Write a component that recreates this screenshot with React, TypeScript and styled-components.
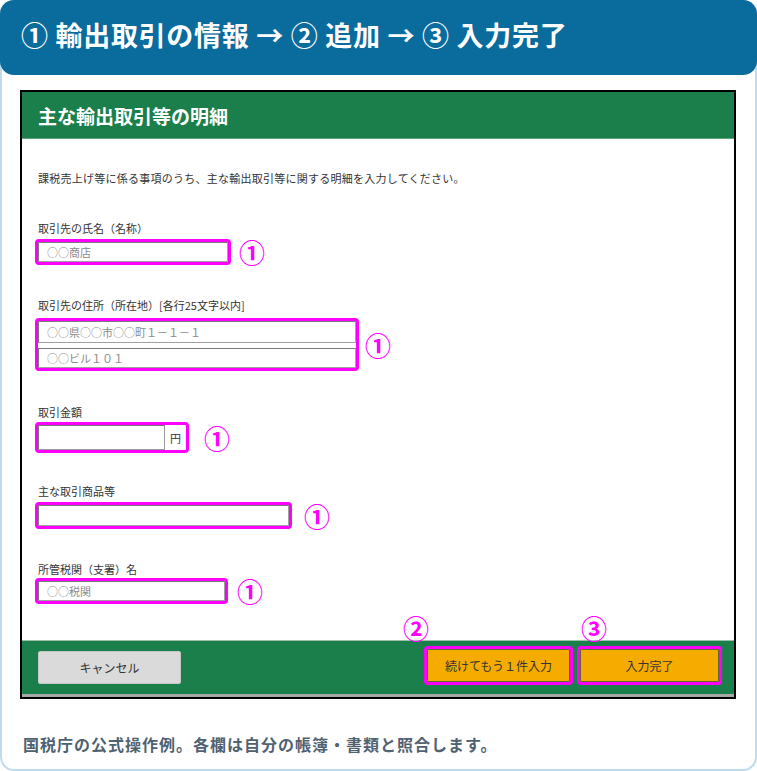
import React from 'react'
import styled, { createGlobalStyle } from 'styled-components'

const GlobalStyle = createGlobalStyle`
  html, body {
    margin: 0;
    padding: 0;
    background: #fff;
  }
  body {
    font-family: "Noto Sans CJK JP", "Noto Sans", sans-serif;
  }
`

const Card = styled.div`
  box-sizing: border-box;
  width: 757px;
  height: 771px;
  border: 2px solid #bfdcee;
  border-radius: 14px;
  background: #fff;
  display: flex;
  flex-direction: column;
`

const StepBar = styled.div`
  margin: -2px -2px 0;
  height: 75px;
  background: #0a6b9d;
  border-radius: 14px;
  display: flex;
  align-items: center;
  padding-left: 21px;
  padding-bottom: 6px;
  box-sizing: border-box;
  color: #fff;
  font-size: 27px;
  font-weight: 700;
  letter-spacing: 0.7px;
  white-space: pre;
`

const Shot = styled.div`
  margin: 15px 19px 0 18px;
  border: 2px solid #000;
  display: flex;
  flex-direction: column;
  background: #fff;
`

const ShotHeader = styled.div`
  height: 46px;
  background: #1a7f4b;
  border-bottom: 1px solid #56a57a;
  display: flex;
  align-items: center;
  padding-left: 16px;
  color: #fff;
  font-size: 19px;
  font-weight: 700;
`

const ShotBody = styled.div`
  height: 501px;
  box-sizing: border-box;
  padding: 31px 16px 0;
  color: #333;
  font-size: 11px;
`

const Note = styled.div`
  line-height: 16px;
  letter-spacing: 0.25px;
`

const Field = styled.div<{ $top: number }>`
  margin-top: ${p => p.$top}px;
`

const Label = styled.div<{ $gap: number }>`
  line-height: 16px;
  margin-bottom: ${p => p.$gap}px;
`

const Row = styled.div<{ $gap: number }>`
  display: flex;
  align-items: center;
  gap: ${p => p.$gap}px;
  margin-left: -3px;
`

const Highlight = styled.div<{ $w: number }>`
  width: ${p => p.$w}px;
  box-sizing: border-box;
  border: 3px solid #ff00ff;
  border-radius: 4px;
  display: flex;
  flex-direction: column;
  gap: 5px;
  background: #fff;
`

const TextBox = styled.div<{ $h?: number }>`
  height: ${p => p.$h ?? 20}px;
  box-sizing: border-box;
  border: 1px solid #a0a0a0;
  border-top-color: #7a7a7a;
  border-left-color: #7a7a7a;
  display: flex;
  align-items: center;
  padding-left: 8px;
  color: #8a8a8a;
  font-size: 11px;
  background: #fff;
`

const Amount = styled.div`
  display: flex;
  height: 25px;
`

const AmountInput = styled.div`
  flex: 1;
  border: 1px solid #9a9a9a;
  border-top-color: #777;
  border-left-color: #777;
`

const Yen = styled.div`
  width: 21px;
  display: flex;
  align-items: center;
  justify-content: center;
  color: #333;
  font-size: 11px;
`

const Mark = styled.span`
  color: #ff00ff;
  font-size: 26px;
  font-weight: 700;
  line-height: 1;
`

const Footer = styled.div`
  height: 53px;
  background: #1a7f4b;
  border-top: 1px solid #9cc0aa;
  border-bottom: 3px solid #a8a8a8;
  display: flex;
  align-items: center;
  padding: 0 12px 0 16px;
`

const CancelButton = styled.div`
  width: 143px;
  height: 33px;
  box-sizing: border-box;
  background: #dadada;
  border: 1px solid #c6c6c6;
  border-radius: 2px;
  display: flex;
  align-items: center;
  justify-content: center;
  color: #333;
  font-size: 12px;
`

const Actions = styled.div`
  margin-left: auto;
  margin-bottom: 4px;
  display: flex;
  gap: 4px;
`

const ActionWrap = styled.div`
  position: relative;
`

const ActionButton = styled.div<{ $w: number }>`
  width: ${p => p.$w}px;
  height: 39px;
  box-sizing: border-box;
  border: 3px solid #ff00ff;
  border-radius: 4px;
  background: #f5ab00;
  box-shadow: inset 0 0 0 1px #5b6b2a;
  display: flex;
  align-items: center;
  justify-content: center;
  color: #333;
  font-size: 12px;
`

const StepMark = styled(Mark)<{ $left: number }>`
  position: absolute;
  left: ${p => p.$left}px;
  top: -31px;
`

const Caption = styled.div`
  margin: 33px 0 0 21px;
  color: #4f6272;
  font-size: 16px;
  font-weight: 700;
  letter-spacing: 1px;
`

export default function App() {
  return (
    <>
      <GlobalStyle />
      <Card>
        <StepBar>① 輸出取引の情報 → ② 追加 → ③ 入力完了</StepBar>
        <Shot>
          <ShotHeader>主な輸出取引等の明細</ShotHeader>
          <ShotBody>
            <Note>課税売上げ等に係る事項のうち、主な輸出取引等に関する明細を入力してください。</Note>

            <Field $top={34}>
              <Label $gap={3}>取引先の氏名（名称）</Label>
              <Row $gap={8}>
                <Highlight $w={196}>
                  <TextBox>○○商店</TextBox>
                </Highlight>
                <Mark>①</Mark>
              </Row>
            </Field>

            <Field $top={32}>
              <Label $gap={5}>取引先の住所（所在地）[各行25文字以内]</Label>
              <Row $gap={6}>
                <Highlight $w={324}>
                  <TextBox $h={22}>○○県○○市○○町１－１－１</TextBox>
                  <TextBox>○○ビル１０１</TextBox>
                </Highlight>
                <Mark>①</Mark>
              </Row>
            </Field>

            <Field $top={33}>
              <Label $gap={2}>取引金額</Label>
              <Row $gap={15}>
                <Highlight $w={154}>
                  <Amount>
                    <AmountInput />
                    <Yen>円</Yen>
                  </Amount>
                </Highlight>
                <Mark>①</Mark>
              </Row>
            </Field>

            <Field $top={30}>
              <Label $gap={3}>主な取引商品等</Label>
              <Row $gap={12}>
                <Highlight $w={257}>
                  <TextBox $h={21} />
                </Highlight>
                <Mark>①</Mark>
              </Row>
            </Field>

            <Field $top={32}>
              <Label $gap={1}>所管税関（支署）名</Label>
              <Row $gap={9}>
                <Highlight $w={193}>
                  <TextBox>○○税関</TextBox>
                </Highlight>
                <Mark>①</Mark>
              </Row>
            </Field>
          </ShotBody>
          <Footer>
            <CancelButton>キャンセル</CancelButton>
            <Actions>
              <ActionWrap>
                <StepMark $left={-21}>②</StepMark>
                <ActionButton $w={149}>続けてもう１件入力</ActionButton>
              </ActionWrap>
              <ActionWrap>
                <StepMark $left={4}>③</StepMark>
                <ActionButton $w={145}>入力完了</ActionButton>
              </ActionWrap>
            </Actions>
          </Footer>
        </Shot>
        <Caption>国税庁の公式操作例。各欄は自分の帳簿・書類と照合します。</Caption>
      </Card>
    </>
  )
}
